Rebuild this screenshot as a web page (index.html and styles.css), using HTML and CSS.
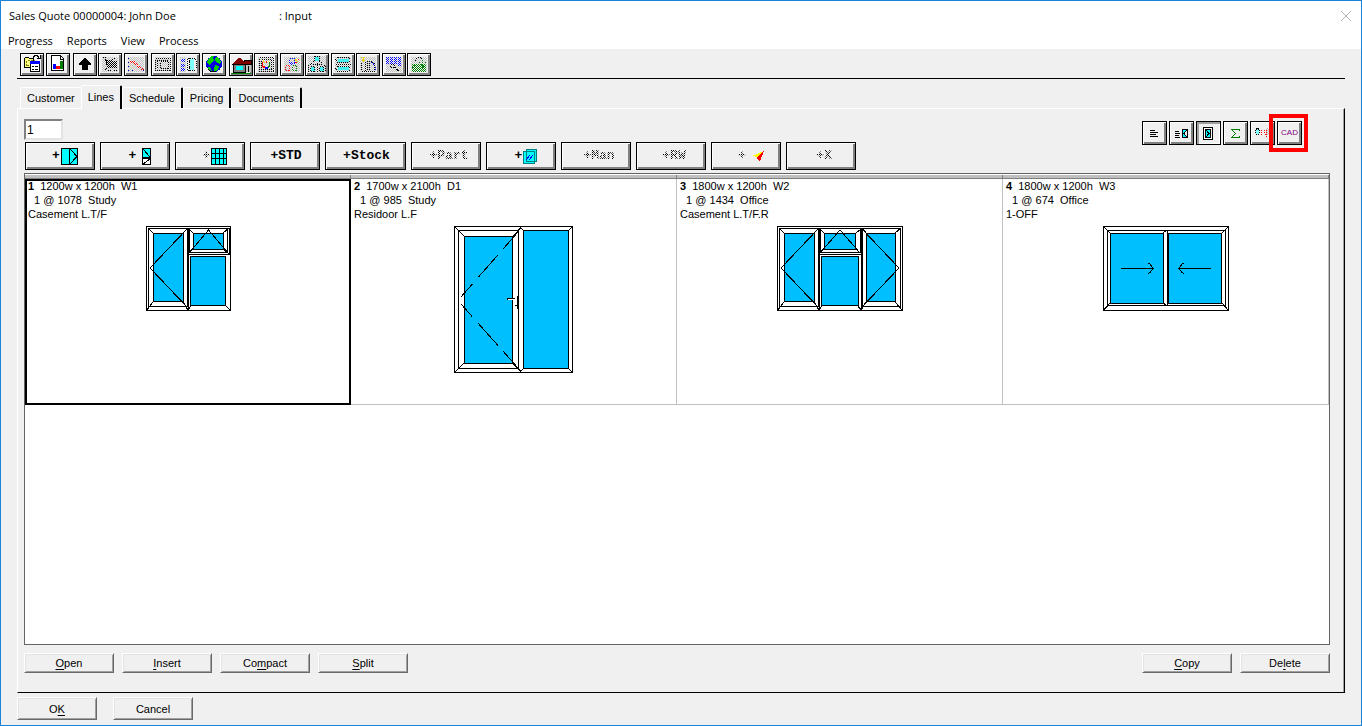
FILE: index.html
```html
<!DOCTYPE html>
<html lang="en">
<head>
<meta charset="utf-8">
<title>Sales Quote 00000004: John Doe</title>
<link rel="stylesheet" href="styles.css">
</head>
<body>
<svg class="defs" aria-hidden="true">
  <defs>
    <pattern id="dither" width="2" height="2" patternUnits="userSpaceOnUse"><path fill="#c0c0c0" d="M0 0h1v1H0zM1 1h1v1H1z"/></pattern>
    <pattern id="dither-blue" width="2" height="2" patternUnits="userSpaceOnUse"><path fill="#00f" d="M0 0h1v1H0zM1 1h1v1H1z"/></pattern>
    <pattern id="dither-green" width="2" height="2" patternUnits="userSpaceOnUse"><path fill="#008000" d="M0 0h1v1H0zM1 1h1v1H1z"/></pattern>
    <pattern id="dither-black" width="2" height="2" patternUnits="userSpaceOnUse"><path d="M0 0h1v1H0zM1 1h1v1H1z"/></pattern>
  </defs>
</svg>
<div class="window">
  <header class="titlebar">
    <h1 class="title"><span class="title-name">Sales Quote 00000004: John Doe</span><span>: Input</span></h1>
    <button class="close" aria-label="Close"><svg width="10" height="10" viewBox="0 0 10 10"><path d="M0 0l10 10M10 0L0 10" stroke="#b4b4b4"/></svg></button>
  </header>
  <nav class="menu">
    <button>Progress</button><button>Reports</button><button>View</button><button>Process</button>
  </nav>
  <main class="body">
    <div class="toolbar">
      <button class="raised tool" aria-label="Open schedule"><svg viewBox="1 1 22 21"><path fill="#ffff80" stroke="#000" d="M4.500 14.500v-9l1-1h3l1 1h4v9z"/><path fill="#ffff80" stroke="#808000" stroke-dasharray="2 1" d="M6.500 12.500v-5h8v5z"/><path fill="none" stroke="#000" d="M13 4.500l2-2h2l2 2M20.500 2v3.500H17"/><path fill="#fff" stroke="#000" d="M10.500 9.500h9v9h-9z"/><path fill="#00f" d="M10 8h10v3H10z"/><path d="M12 13h2v1h-2zm3 0h3v1h-3zm-3 3h2v1h-2zm3 0h3v1h-3z"/></svg></button>
      <button class="raised tool" aria-label="Chart"><svg viewBox="1 1 22 21"><path fill="#fff" stroke="#000" d="M5.500 2.500h9l3 3v12h-12z"/><path fill="none" stroke="#000" d="M14.500 3v3H17"/><path fill="#00f" d="M7 11h3v5H7z"/><path fill="red" d="M10 13h4v3h-4z"/><path fill="#008000" d="M14 8h3v8h-3z"/></svg></button>
      <span class="pair section"><button class="raised tool" aria-label="Up"><svg viewBox="1 1 22 21"><path d="M11 5h2v1h1v1h1v1h1v1h1v1h1v2h-3v5H9v-5H6v-2h1V9h1V8h1V7h1V6h1z"/></svg></button>
      <button class="raised tool" disabled aria-label="Basket"><svg viewBox="1 1 22 21"><path fill="url(#dither)" d="M4 4h16v15H4z"/><path fill="url(#dither-black)" d="M8 8h11v6H9z"/><path class="dots" d="M4.500 4.500h3l2 10h9M6.500 7.500h7l4-3M9.500 17.500h3M15.500 17.500h3M5.500 18.500l4-4"/></svg></button></span>
      <button class="raised tool" disabled aria-label="Trend"><svg viewBox="1 1 22 21"><path fill="url(#dither)" d="M4 4h16v15H4z"/><path fill="red" d="M6 8h1v1H6zM7 9h1v1H7zM8 8h1v1H8zM9 9h1v1H9zM10 8h1v1h-1zM10 10h1v1h-1zM11 11h1v1h-1zM12 10h1v1h-1zM13 11h1v1h-1zM13 13h1v1h-1zM14 14h1v1h-1zM15 13h1v1h-1zM16 14h1v1h-1zM17 16h1v1h-1zM18 15h1v1h-1zM19 16h1v1h-1z"/><path fill="#0000a0" d="M4 5h1v1H4zM4 9h1v1H4zM4 13h1v1H4zM4 17h1v1H4zM8 17h1v1H8zM19 17h1v1h-1z"/></svg></button>
      <span class="pair section"><button class="raised tool" disabled aria-label="Frame"><svg viewBox="1 1 22 21"><path fill="url(#dither)" d="M4 4h16v14H4z"/><path class="dots" d="M4.500 5.500h15v12h-15zM6.500 7.500v8M9.500 8.500h8v7h-8zM6 7.500h12"/></svg></button>
      <button class="raised tool" disabled aria-label="Frame options"><svg viewBox="1 1 22 21"><path fill="url(#dither)" d="M4 4h6v15H4z"/><path fill="#80ffff" d="M14 6h4v11h-4z"/><path class="dots" d="M11.500 5.500h7l2 2v8l-2 2h-7zM13.500 5v13M11 8.500h3M11 14.500h3"/><path fill="url(#dither-blue)" d="M5 6h4v3H5zM5 11h4v3H5zM5 15h4v3H5z"/></svg></button></span>
      <button class="raised tool" aria-label="World"><svg viewBox="1 1 22 21"><circle cx="12" cy="11" r="8" fill="#0000e0"/><path fill="#00d000" d="M6 6l3-3h3l-1 2 1 2-2 2-2 3-3-2zM14 4l3 1 2 4-1 2-3-1-2-3zM13 12l4 1-1 4-3 2-1-3zM6 14l3 1 1 3-3-1z"/><path fill="none" stroke="#000" d="M6 16.500l3 2h5"/></svg></button>
      <span class="pair section"><button class="raised tool" aria-label="House"><svg viewBox="1 1 22 21"><path fill="#800000" stroke="#000" d="M15 7.500h7v4h-7z"/><path fill="#c0c0c0" d="M17 12h5v7h-5z"/><path fill="#808080" stroke="#000" d="M4.500 11.500h12v8h-12z"/><path fill="#800000" d="M3 11l6-6h2l6 6z"/><path d="M3 11h14v1H3zM19 13h1v6h-1z"/><path fill="#0ff" d="M7 13h7v4H7z"/><path fill="#008000" d="M2 20h20v1H2z"/></svg></button>
      <button class="raised tool" disabled aria-label="Colours"><svg viewBox="1 1 22 21"><path fill="url(#dither)" d="M4 4h16v15H4z"/><path class="dots" d="M5.500 4.500h14v14h-14zM7.500 6.500h10v10h-10z"/><path fill="#ffe000" d="M9 7h1v2H9zM10 9h1v1h-1zM14 8h1v1h-1z"/><path fill="red" d="M8 9h1v5H8zM9 13h2v2H9zM12 8h1v2h-1z"/><path fill="#00f" d="M11 14h3v2h-3z"/><path fill="#008000" d="M15 9h1v5h-1zM14 13h1v2h-1z"/></svg></button></span>
      <span class="pair"><button class="raised tool" disabled aria-label="Shapes"><svg viewBox="1 1 22 21"><path fill="url(#dither)" d="M4 4h16v15H4z"/><path class="dots blue" d="M9.500 5.500h5v5h-5zM11.500 9v4"/><path class="dots red" d="M5.500 12.500h4v5h-4zM14.500 11.500l4-5"/><path class="dots green" d="M12.500 12.500h4v5h-4z"/><path fill="#ffe000" d="M15 6h2v2h-2zM17 8h1v1h-1z"/></svg></button>
      <button class="raised tool" disabled aria-label="Network"><svg viewBox="1 1 22 21"><path fill="url(#dither)" d="M3 3h18v16H3z"/><path fill="#40f0f0" d="M10 4h4v4h-4zM6 14h4v4H6zM15 14h4v4h-4z"/><path class="dots" d="M9.500 3.500h5v5M9.500 3v5l-6 5v6M14.500 8l6 5v6M7.500 11.500h9M5.500 13.500h4v5h-4zM14.500 13.500h4v5h-4zM12.500 10v9"/></svg></button></span>
      <span class="pair"><button class="raised tool" disabled aria-label="Section"><svg viewBox="1 1 22 21"><path fill="url(#dither)" d="M4 4h16v15H4z"/><path fill="#40f0f0" d="M7 6h11v3H7zM7 14h11v3H7z"/><path class="dots" d="M6.500 4.500h11l2 2-2 3h-11l-2-3zM4.500 11.500h15M6.500 13.500h11l2 2-2 3h-11l-2-3z"/></svg></button>
      <button class="raised tool" disabled aria-label="Site"><svg viewBox="1 1 22 21"><path fill="url(#dither)" d="M4 4h16v15H4z"/><path fill="none" stroke="#e8d800" stroke-dasharray="2 1" d="M5 4l4 4M9 4L5 9M7.500 4v6"/><path class="dots" d="M5.500 10v8h13v-7l-3-3h-4v10M9.500 9v9M13.500 10v8"/><path class="dots blue" d="M15.500 9.500l4 3v5"/></svg></button></span>
      <span class="pair"><button class="raised tool" disabled aria-label="Inspect"><svg viewBox="1 1 22 21"><path fill="url(#dither)" d="M4 4h16v15H4z"/><path fill="url(#dither-blue)" d="M4 4h3v7H4zM8 4h3v7H8zM12 4h3v7h-3zM16 4h3v9h-3z"/><path class="dots" d="M8.500 11.500h4v3h-4zM12.500 14.500l4 4M13.500 14.500l4 4"/></svg></button>
      <button class="raised tool" disabled aria-label="Export"><svg viewBox="1 1 22 21"><path fill="url(#dither)" d="M4 4h16v15H4z"/><path fill="url(#dither-green)" d="M5 11h14v8H5z"/><path class="dots" d="M7.500 9.500l3-5h3l2 3"/><path class="dots green" d="M15.500 7v5M12.500 9.500l3 3 3-3M5.500 14.500l4-3 4 4 5-3"/></svg></button></span>
    </div>

    <div class="tabs" role="tablist">
      <button class="tab" role="tab">Customer</button><button class="tab selected" role="tab" aria-selected="true">Lines</button><button class="tab" role="tab">Schedule</button><button class="tab" role="tab">Pricing</button><button class="tab" role="tab">Documents</button>
    </div>

    <section class="panel">
      <div class="controls">
        <div class="entry">
          <input class="line-no" type="text" value="1" aria-label="Line number">
          <div class="adders">
            <button class="raised add icon" aria-label="Add window"><span>+</span><svg width="17" height="17" viewBox="0 0 17 17"><path fill="#0ff" stroke="#000" d="M.5.500h16v16H.5zM8.500 0v17M9 1l7 7.500L9 16"/></svg></button>
            <button class="raised add icon wide-gap" aria-label="Add door"><span>+</span><svg width="9" height="17" viewBox="0 0 9 17"><path fill="#0ff" stroke="#000" d="M.5.500h8v9h-8zM1 1l7 8"/><path fill="#fff" stroke="#000" d="M.5 10.500h8v6h-8zM1 16l7-5"/></svg></button>
            <button class="raised add icon" aria-label="Add grid"><span class="dithered">+</span><svg width="16" height="17" viewBox="0 0 16 17"><path fill="#0ff" stroke="#000" d="M.5.500h15v16H.5zM4.500 0v17M8.500 0v17M12.500 0v17M0 5.500h16M0 10.500h16"/></svg></button>
            <button class="raised add">+STD</button>
            <button class="raised add wide">+Stock</button>
            <button class="raised add" disabled><span class="dithered">+Part</span></button>
            <button class="raised add icon" aria-label="Add glass"><span>+</span><svg width="14" height="15" viewBox="0 0 14 15"><path fill="#0ff" stroke="#008080" d="M3.500.500h10v12h-10zM.5 2.500h11v12H.500z"/><path stroke="#00f" d="M3 11l4-5M6 11l4-5"/></svg></button>
            <button class="raised add" disabled><span class="dithered">+Man</span></button>
            <button class="raised add" disabled><span class="dithered">+RW</span></button>
            <button class="raised add icon wide-gap" aria-label="Add remark"><span class="dithered">+</span><svg width="12" height="11" viewBox="0 0 12 11"><path fill="#ff0" d="M0 5l12-5-7 6z"/><path fill="red" d="M12 0L8 10 4 7z"/></svg></button>
            <button class="raised add" disabled><span class="dithered">+X</span></button>
          </div>
        </div>
        <div class="views">
          <button class="raised view" aria-label="List"><svg viewBox="1 1 23 22"><path stroke="#000" d="M8 9.500h5M8 11.500h8M8 13.500h6M8 15.500h8"/></svg></button>
          <button class="raised view" aria-label="List and drawing"><svg viewBox="1 1 23 22"><path stroke="#000" d="M6 10.500h4M6 12.500h5M6 14.500h4M6 16.500h5"/><path fill="#0ff" stroke="#000" d="M13.500 8.500h5v8h-5zM18 9l-3 3.500 3 3.500"/></svg></button>
          <button class="view pressed" aria-label="Drawing" aria-pressed="true"><svg viewBox="1 1 23 22"><path fill="#fff" stroke="#000" d="M7.500 6.500h9v12h-9z"/><path fill="#0ff" stroke="#000" d="M9.500 8.500h5v8h-5zM10 9l3 3.500-3 3.500"/></svg></button>
          <button class="raised view" aria-label="Totals"><svg viewBox="1 1 23 22"><path fill="none" stroke="#008000" d="M16 9.500V8.500H8.500l4 4-4 4H16v-2"/></svg></button>
          <button class="raised view" disabled aria-label="Compare"><svg viewBox="1 1 23 22"><path fill="#80ffff" d="M6 8h3v5H6z"/><path class="dots" d="M6.500 7.500h2l1 2v2l-1 2h-2l-1-2v-2z"/><path class="dots red" d="M11.500 9v5M13.500 15.500l3-3M14.500 9v3M16.500 9v7"/><path fill="url(#dither)" d="M16 7h3v7h-3z"/></svg></button>
          <button class="raised view marked">CAD</button>
        </div>
      </div>

      <div class="list">
        <div class="heads"><span></span><span></span><span></span><span></span></div>
        <div class="cells">
          <article class="cell current">
            <p><b>1</b>  1200w x 1200h  W1</p><p>  1 @ 1078  Study</p><p>Casement L.T/F</p>
            <svg class="drawing" width="85" height="85" viewBox="0 0 85 85" role="img" aria-label="Casement L.T/F">
              <path class="frame" d="M.5.500h84v84H.5zM2.500 2.500h39v78h-39zM43.500 2.500h38v24h-38zM42.500 2v83M42 28.500h43M83.500 2v26"/>
              <path class="glass" d="M7.500 7.500h30v68h-30zM47.500 7.500h30v16h-30zM44.500 30.500h35v49h-35z"/>
              <path class="line" d="M0 85l7-9M2 2l5 5M37 76l5 8M79 79l6 6M83 2l-6 5M43 3l4 4M42 84l3-4M78 24l5 4M41 3L4 42l37 39M43 27l19.500-23L82 27"/>
            </svg>
          </article>
          <article class="cell">
            <p><b>2</b>  1700w x 2100h  D1</p><p>  1 @ 985  Study</p><p>Residoor L.F</p>
            <svg class="drawing" width="119" height="147" viewBox="0 0 119 147" role="img" aria-label="Residoor L.F">
              <path class="frame" d="M.5.500h118v146H.5zM4.500 4.500h60v138h-60z"/>
              <path class="glass" d="M10.500 10.500h48v127h-48zM69.500 4.500h45v138h-45z"/>
              <path class="line" d="M0 0l10 10M0 147l10-10M59 10l7.500-8 4 3M59 138l7.500 7 4-3M119 0l-5 5M119 147l-5-5"/>
              <path class="line" stroke-dasharray="22 8 30 9" d="M64 6L7 71M64 142L7 78"/>
              <path fill="#fff" d="M53 73h8v1h-8z"/><path d="M53 72h8v1h-8zM63 70h1v13h-1zM61 79h2v1h-2zM53 72h1v2h-1z"/>
            </svg>
          </article>
          <article class="cell">
            <p><b>3</b>  1800w x 1200h  W2</p><p>  1 @ 1434  Office</p><p>Casement L.T/F.R</p>
            <svg class="drawing" width="126" height="85" viewBox="0 0 126 85" role="img" aria-label="Casement L.T/F.R">
              <path class="frame" d="M.5.500h125v84H.5zM2.500 2.500h39v78h-39zM43.500 2.500h40v24h-40zM85.500 2.500h38v78h-38zM42.500 2v83M84.500 2v83M42 28.500h42"/>
              <path class="glass" d="M7.500 7.500h30v68h-30zM47.500 7.500h31v16h-31zM44.500 30.500h37v49h-37zM89.500 7.500h29v68h-29z"/>
              <path class="line" d="M0 85l7-9M2 2l5 5M37 76l5 8M126 85l-8-9M124 2l-6 5M89 76l-5 8M43 3l4 4M84 3l-5 4M86 3l3 4M42 84l3-4M84 84l-3-4M41 3L4 42l37 39M43 27L63 4l20 23M85 3l37 39-37 39"/>
            </svg>
          </article>
          <article class="cell">
            <p><b>4</b>  1800w x 1200h  W3</p><p>  1 @ 674  Office</p><p>1-OFF</p>
            <svg class="drawing" width="126" height="85" viewBox="0 0 126 85" role="img" aria-label="1-OFF">
              <path class="frame" d="M.5.500h125v84H.5zM4.500 4.500h118v75H4.500zM64.500 4v76"/>
              <path class="glass" d="M7.500 7.500h53v70h-53zM65.500 7.500h53v70h-53z"/>
              <path class="line" d="M0 0l7 7M0 85l7-8M126 0l-7 7M126 85l-7-8M60 7l4-3M60 77l4 3M18 42.500h32M45 37l2 1 3 4.500-3 4-2 1M108 42.500H76M81 37l-2 1-3 4.500 3 4 2 1"/>
            </svg>
          </article>
        </div>
      </div>

      <div class="actions">
        <button class="push"><span><u>O</u>pen</span></button><button class="push"><span><u>I</u>nsert</span></button><button class="push"><span>Co<u>m</u>pact</span></button><button class="push"><span><u>S</u>plit</span></button>
        <button class="push far"><span><u>C</u>opy</span></button><button class="push"><span>De<u>l</u>ete</span></button>
      </div>
    </section>

    <footer class="footer">
      <button class="push ok"><span>O<u>K</u></span></button><button class="push ok"><span>Cancel</span></button>
    </footer>
  </main>
</div>
</body>
</html>
```
FILE: styles.css
```css
* { box-sizing: border-box; }
body { margin: 0; font: 11px/14px "Liberation Sans", Arial, sans-serif; color: #000; }
button { font: inherit; color: inherit; background: none; border: 0; border-radius: 0; padding: 0; margin: 0; }
p, h1 { margin: 0; }
svg { display: block; shape-rendering: crispEdges; }
u { text-underline-offset: 2px; }
.defs { position: absolute; width: 0; height: 0; }

.window { display: flex; flex-direction: column; min-height: 100vh; background: #f0f0f0; border: 1px solid #1883d7; }

.titlebar { display: flex; justify-content: space-between; align-items: center; height: 31px; padding: 0 10px 2px 8px; background: #fff; }
.title { display: flex; font: 11px/16px "Open Sans", sans-serif; }
.title-name { width: 270px; }
.close svg { shape-rendering: auto; }
.menu { display: flex; gap: 14px; height: 17px; padding-left: 7px; background: #fff; font: 11px/17px "Open Sans", sans-serif; }

.body { flex: 1; display: flex; flex-direction: column; padding: 4px 16px 5px; }

.raised { border: 1px solid #000; background: #f0f0f0; box-shadow: inset 1px 1px #fff, inset -2px -2px #808080; }
.toolbar { display: flex; gap: 2px; height: 26px; padding-left: 3px; border-bottom: 1px solid #000; }
.pair { display: flex; gap: 1px; }
.section { margin-left: 1px; }
.tool { width: 24px; height: 23px; }
.tool svg { width: 22px; height: 21px; }
.dots { fill: none; stroke: #000; stroke-dasharray: 1 1; }
.blue { stroke: #00f; }
.red { stroke: red; }
.green { stroke: #008000; }

.tabs { display: flex; align-items: flex-end; height: 29px; padding-left: 3px; }
.tab { height: 21px; padding: 0 6px 1px; border: solid; border-width: 1px 2px 0 1px; border-color: #fff #000 transparent #fff; border-radius: 2px 2px 0 0; }
.tab:first-child { border-right: 0; }
.selected { height: 24px; padding-bottom: 2px; margin-bottom: -1px; background: #f0f0f0; position: relative; }

.panel { flex: 1; display: flex; flex-direction: column; padding: 10px 14px 19px 6px; border: 1px solid #000; border-top-color: #fff; border-left-color: #fff; box-shadow: inset -1px 0 #a0a0a0; }
.controls { display: flex; justify-content: space-between; }
.line-no { display: block; width: 39px; height: 21px; margin-bottom: 2px; padding: 0 1px; border: 2px solid; border-color: #808080 #e3e3e3 #e3e3e3 #808080; background: #fff; font: 12px/16px "Liberation Sans", Arial, sans-serif; outline: 0; }
.adders { display: flex; gap: 5px; padding-left: 1px; }
.add { display: flex; align-items: center; justify-content: center; gap: 1px; width: 70px; height: 28px; padding-left: 2px; font: bold 13px/16px "Liberation Mono", "Courier New", monospace; }
.add:disabled { padding-left: 6px; }
.icon { padding-left: 10px; }
.wide { width: 81px; }
.wide-gap { gap: 6px; }
.dithered { color: transparent; background: repeating-conic-gradient(#000 0 25%, #f0f0f0 0 50%) 0 0 / 2px 2px; -webkit-background-clip: text; background-clip: text; }
.views { display: flex; gap: 2px; padding-top: 2px; margin-right: 28px; }
.view { width: 25px; height: 24px; }
.view svg { width: 23px; height: 22px; }
.pressed { border: 1px solid #000; background: #f0f0f0; box-shadow: inset 2px 2px #a0a0a0, inset -1px -1px #fff; }
.marked { position: relative; color: #800080; font-size: 8px; }
.marked::after { content: ""; position: absolute; inset: -8px -7px -8px -9px; border: 4px solid red; }

.list { flex: 1; margin-top: 3px; border: 1px solid #646464; background: #fff; }
.heads, .cells { display: grid; grid-template-columns: repeat(4, 1fr); }
.heads { height: 5px; padding-top: 1px; }
.heads span { background: #c0c0c0; border-right: 1px solid #808080; border-bottom: 1px solid #808080; }
.cell { height: 226px; padding: 0 3px; border-right: 1px solid #c0c0c0; border-bottom: 1px solid #c0c0c0; }
.cell p { white-space: pre; }
.current { border: 0; box-shadow: inset 0 0 0 2px #000; }
.drawing { margin: 5px auto 0; }
.frame { fill: #fff; stroke: #000; }
.glass { fill: #00bfff; stroke: #000; }
.line { fill: none; stroke: #000; }

.actions { display: flex; gap: 8px; margin-top: 8px; }
.push { width: 90px; height: 20px; border: 1px solid; border-color: #fff #696969 #696969 #fff; box-shadow: inset 1px 1px #e3e3e3, inset -1px -1px #a0a0a0; font-size: 11px; }
.far { margin-left: auto; }
.footer { display: flex; gap: 16px; padding-top: 4px; }
.ok { width: 80px; height: 23px; }
```
